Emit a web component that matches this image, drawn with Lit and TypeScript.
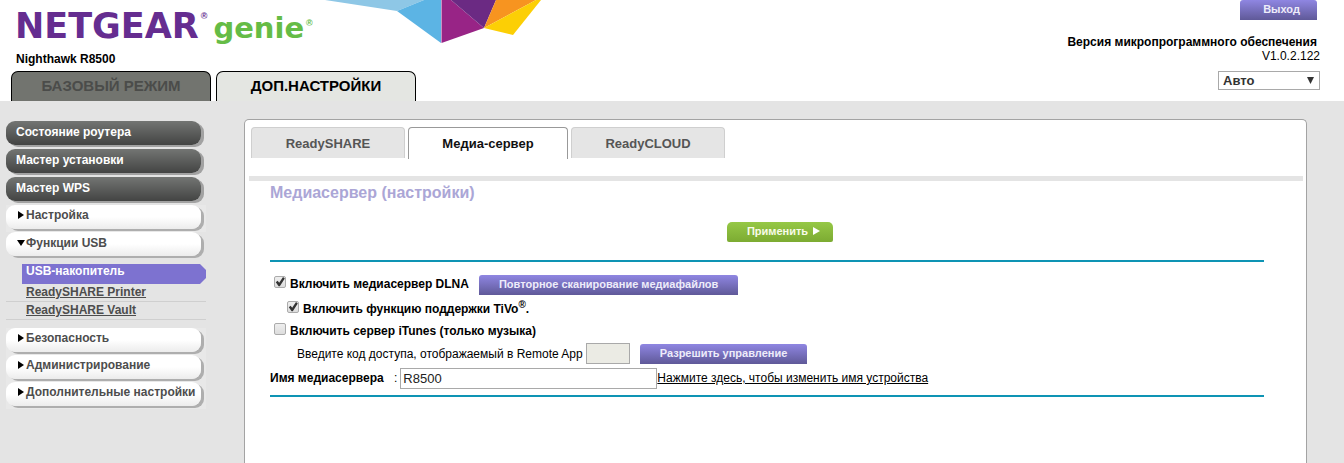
import { LitElement, html, css, svg } from "lit";
import { customElement, property } from "lit/decorators.js";
import { classMap } from "lit/directives/class-map.js";

@customElement("genie-header")
class GenieHeader extends LitElement {
  static styles = css`
    :host { display: block; background: #fff; }
    .header { display: flex; justify-content: space-between; }
    .brand-row { display: flex; height: 49px; }
    .brand { display: flex; align-items: baseline; width: 305px; padding: 6px 0 0 15px; font: bold 35px/40px "DejaVu Sans", sans-serif; color: #652d90; white-space: nowrap; }
    .genie { color: #65bc46; margin-left: 6px; font-size: 29px; }
    .reg { align-self: flex-start; margin-left: 2px; font: bold 9px/20px "Liberation Sans", Arial, sans-serif; }
    .genie-reg { color: #65bc46; line-height: 34px; }
    .art { display: block; width: 225px; height: 44px; }
    .model { padding-left: 16px; font-size: 12px; line-height: 20px; height: 22px; font-weight: bold; }
    .modes { display: flex; gap: 5px; padding-left: 11px; }
    .mode { width: 200px; height: 30px; padding: 0 0 2px; border: 1px solid #000; border-bottom: 0; border-radius: 7px 7px 0 0; background: #e4e6e2; font: bold 15px "Liberation Sans", Arial, sans-serif; color: #000; }
    .mode.inactive { background: #72746f; color: #4b4c4a; }
    .side { display: flex; flex-direction: column; align-items: flex-end; padding-right: 24px; }
    .logout { width: 77px; height: 20px; margin-right: 3px; border: 0; padding: 0 0 2px 6px; border-radius: 3px 3px 0 0; background: linear-gradient(#8f86e2, #5f5998); color: #eeecfa; font: bold 11px "Liberation Sans", Arial, sans-serif; }
    .version { margin-top: 15px; text-align: right; font-size: 12px; line-height: 14px; }
    .version b { padding-right: 3px; }
    .lang { position: relative; margin-top: 8px; }
    .lang select { display: block; appearance: none; width: 102px; height: 19px; padding: 0 4px; border: 1px solid #a9a9a9; border-radius: 0; background: #fff; color: #333; font: bold 13px "Liberation Sans", Arial, sans-serif; }
    .lang svg { position: absolute; right: 6px; top: 6px; width: 7px; height: 7px; pointer-events: none; }
  `;
  render() {
    return html`
      <header class="header">
        <div>
          <div class="brand-row">
            <div class="brand">
              <span>NETGEAR</span><span class="reg">®</span>
              <span class="genie">genie</span><span class="reg genie-reg">®</span>
            </div>
            <svg class="art" viewBox="0 0 225 44" aria-hidden="true">
              <path d="M5 0 77 11 104 0Z" fill="#8ec7e6" />
              <path d="M77 11 104 0H121V43Z" fill="#5cb4e4" />
              <path d="M121.500 0H131L164 28 121.500 43Z" fill="#982486" />
              <path d="M131 0H176L164 28Z" fill="#6b2a83" />
              <path d="M176 0H216L164 28Z" fill="#f79420" />
              <path d="M216 0H221L193 35 164 28Z" fill="#fccf05" />
            </svg>
          </div>
          <div class="model">Nighthawk R8500</div>
          <nav class="modes">
            <button class="mode inactive">БАЗОВЫЙ РЕЖИМ</button>
            <button class="mode">ДОП.НАСТРОЙКИ</button>
          </nav>
        </div>
        <div class="side">
          <button class="logout">Выход</button>
          <div class="version"><b>Версия микропрограммного обеспечения</b><br />V1.0.2.122</div>
          <div class="lang">
            <select aria-label="Язык"><option>Авто</option></select>
            <svg viewBox="0 0 7 7" aria-hidden="true"><path d="M0 0H7L3.500 7Z" fill="#333" /></svg>
          </div>
        </div>
      </header>
    `;
  }
}

interface MenuItem {
  label: string;
  dark?: boolean;
  links?: string[];
}

@customElement("genie-menu")
class GenieMenu extends LitElement {
  @property({ attribute: false }) items: MenuItem[] = [];

  static styles = css`
    :host { display: block; font-weight: bold; font-size: 12px; }
    .list, .sub { list-style: none; margin: 0; padding: 0; }
    .row { height: 27px; background: #e8e8e8; }
    .row.dark { height: 28px; background: none; }
    .row.open { height: auto; background: none; }
    .item { display: flex; align-items: center; width: 195px; height: 24px; padding: 0 0 4px 12px; box-sizing: border-box; border: 0; border-radius: 9px; background: linear-gradient(#fff 50%, #ececec); box-shadow: 3px 2px 0 #aeaeae; font: inherit; color: #4d4d4d; white-space: nowrap; }
    .dark .item { padding: 0 0 2px 10px; background: linear-gradient(#737573, #434443); box-shadow: 3px 2px 0 #a2a2a2; color: #fff; }
    .open .item { padding: 0 0 2px 11px; margin-bottom: 8px; }
    .arrow { width: 8px; height: 8px; flex: none; }
    .open .arrow { margin-right: 1px; }
    .arrow.closed { width: 6px; margin-right: 2px; }
    .sub { padding-bottom: 8px; }
    .sub-row { height: 17px; line-height: 16px; padding-left: 20px; border-bottom: 1px solid #cfcfcf; }
    .sub-row.current { height: 20px; line-height: 14px; border: 0; margin-left: 16px; padding-left: 4px; background: #7d72d0; clip-path: polygon(0 0, 178px 0, 100% 6px, 100% 14px, 178px 100%, 0 100%); }
    .sub-row a { color: #4d4d4d; }
    .sub-row.current a { color: #fff; text-decoration: none; }
  `;
  private arrow(open: boolean) {
    return html`<svg class=${classMap({ arrow: true, closed: !open })} viewBox=${open ? "0 0 8 8" : "0 0 6 8"} aria-hidden="true">
      ${open ? svg`<path d="M0 1H8L4 7Z" />` : svg`<path d="M0 0 6 4 0 8Z" />`}
    </svg>`;
  }
  render() {
    return html`<nav><ul class="list">
      ${this.items.map((it) => html`
        <li class=${classMap({ row: true, dark: !!it.dark, open: !!it.links })}>
          <button class="item">${it.dark ? "" : this.arrow(!!it.links)}<span>${it.label}</span></button>
          ${it.links
            ? html`<ul class="sub">${it.links.map((l, i) => html`
                <li class=${classMap({ "sub-row": true, current: i === 0 })}><a href="#">${l}</a></li>`)}</ul>`
            : ""}
        </li>`)}
    </ul></nav>`;
  }
}

@customElement("media-server")
class MediaServer extends LitElement {
  static styles = css`
    :host { display: block; box-sizing: border-box; padding: 7px 3px 0 4px; border: 1px solid #a3a3a3; border-bottom: 0; border-radius: 5px 5px 0 0; background: #fff; font-size: 12px; }
    .tabs { display: flex; align-items: flex-start; gap: 3px; height: 49px; padding-left: 2px; }
    .tab { width: 154px; height: 31px; padding: 0; border: 1px solid #cfcfcf; border-bottom: 0; border-radius: 4px 4px 0 0; background: #e5e5e5; color: #555; font: bold 13px "Liberation Sans", Arial, sans-serif; }
    .tab.active { width: 160px; height: 32px; border-color: #999; background: #fff; color: #111; }
    .bar { height: 5px; background: #e4e4e4; }
    .form { padding: 2px 39px 0 21px; }
    .title { margin: 0; font-size: 16px; line-height: 20px; color: #aba6d6; }
    .apply-row { display: flex; justify-content: center; padding: 19px 0 18px 26px; }
    .rule { height: 2px; background: #0e94b4; }
    .btn { height: 20px; padding: 0 20px 2px; border: 0; border-radius: 3px 3px 0 0; background: linear-gradient(#8f86e2, #5f5998); color: #eeecfa; font: bold 11px "Liberation Sans", Arial, sans-serif; white-space: nowrap; }
    .apply { display: flex; align-items: center; gap: 5px; padding: 0 13px 2px 20px; border-radius: 5px 5px 2px 2px; background: linear-gradient(#96c846, #7cab32); color: #f8fbe9; }
    .apply svg { width: 7px; height: 8px; }
    .row { display: flex; align-items: center; }
    .first { height: 22px; padding: 12px 0 3px 4px; }
    .second { height: 22px; padding-left: 17px; }
    .third { height: 21px; padding-left: 4px; }
    .code { height: 23px; padding-left: 27px; }
    .name { height: 26px; margin-bottom: 4px; }
    .check { display: flex; gap: 4px; align-items: flex-start; padding-bottom: 2px; font-weight: bold; line-height: 16px; }
    .check sup { line-height: 0; font-size: 10px; }
    .check input { appearance: none; position: relative; width: 12px; height: 12px; margin: 0; box-sizing: border-box; border: 1px solid #ababab; border-radius: 2px; background: linear-gradient(#eee, #ddd); }
    .check input:checked::before { content: ""; display: block; width: 10px; height: 10px; background: #333; clip-path: polygon(8% 52%, 26% 38%, 42% 58%, 80% 0, 98% 14%, 48% 92%, 36% 92%); }
    .first .btn { margin-left: 10px; }
    .code-input { box-sizing: border-box; width: 44px; height: 21px; margin: 0 10px 0 3px; border: 1px solid #a9a9a9; background: #ebebe4; }
    .label { width: 124px; font-weight: bold; }
    .name-input { box-sizing: border-box; width: 257px; height: 21px; margin-left: 3px; padding: 0 2px; border: 1px solid #a9a9a9; background: #fff; color: #222; font: 13px "Liberation Sans", Arial, sans-serif; }
    .link { color: #000; }
  `;
  render() {
    return html`
      <nav class="tabs">
        <button class="tab">ReadySHARE</button>
        <button class="tab active">Медиа-сервер</button>
        <button class="tab">ReadyCLOUD</button>
      </nav>
      <div class="bar"></div>
      <div class="form">
        <h1 class="title">Медиасервер (настройки)</h1>
        <div class="apply-row">
          <button class="btn apply">Применить
            <svg viewBox="0 0 7 8" aria-hidden="true"><path d="M0 0 7 4 0 8Z" fill="#fff" /></svg>
          </button>
        </div>
        <div class="rule"></div>
        <div class="row first">
          <label class="check"><input type="checkbox" checked /><span>Включить медиасервер DLNA</span></label>
          <button class="btn">Повторное сканирование медиафайлов</button>
        </div>
        <div class="row second">
          <label class="check"><input type="checkbox" checked /><span>Включить функцию поддержки TiVo<sup>®</sup>.</span></label>
        </div>
        <div class="row third">
          <label class="check"><input type="checkbox" /><span>Включить сервер iTunes (только музыка)</span></label>
        </div>
        <div class="row code">
          <label for="code">Введите код доступа, отображаемый в Remote App</label>
          <input id="code" class="code-input" disabled />
          <button class="btn">Разрешить управление</button>
        </div>
        <div class="row name">
          <label class="label" for="name">Имя медиасервера</label><span>:</span>
          <input id="name" class="name-input" value="R8500" />
          <a class="link" href="#">Нажмите здесь, чтобы изменить имя устройства</a>
        </div>
        <div class="rule"></div>
      </div>
    `;
  }
}

@customElement("app-root")
class AppRoot extends LitElement {
  static styles = css`
    :host { display: flex; flex-direction: column; min-height: 100vh; background: #e4e4e4; color: #000; font-family: "Liberation Sans", Arial, sans-serif; }
    .body { flex: 1; display: flex; gap: 38px; padding: 0 37px 0 6px; }
    .menu { flex: none; width: 200px; padding-top: 20px; }
    .content { flex: 1; min-width: 0; margin-top: 18px; }
  `;
  private items: MenuItem[] = [
    { label: "Состояние роутера", dark: true },
    { label: "Мастер установки", dark: true },
    { label: "Мастер WPS", dark: true },
    { label: "Настройка" },
    { label: "Функции USB", links: ["USB-накопитель", "ReadySHARE Printer", "ReadySHARE Vault"] },
    { label: "Безопасность" },
    { label: "Администрирование" },
    { label: "Дополнительные настройки" },
  ];
  render() {
    return html`
      <genie-header></genie-header>
      <div class="body">
        <genie-menu class="menu" .items=${this.items}></genie-menu>
        <media-server class="content"></media-server>
      </div>
    `;
  }
}
